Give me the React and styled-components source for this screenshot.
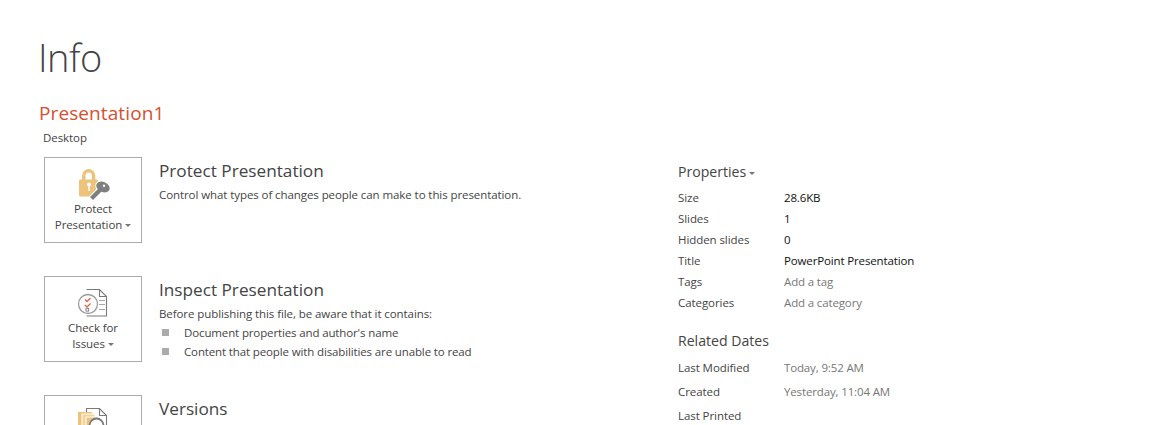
import React from "react";
import styled, { createGlobalStyle } from "styled-components";

const GlobalStyle = createGlobalStyle`
  html, body {
    margin: 0;
    height: 425px;
    overflow: hidden;
    background: #fff;
    font-family: "Open Sans", "Noto Sans", sans-serif;
    color: #444;
  }
`;

const Page = styled.div`
  width: 1170px;
  height: 425px;
  overflow: hidden;
  padding: 32px 0 0 38px;
  box-sizing: border-box;
`;

const Heading = styled.h1`
  margin: 0;
  font-size: 38px;
  line-height: 50px;
  font-weight: 300;
  letter-spacing: -0.5px;
  color: #444;
`;

const FileName = styled.div`
  margin: 17px 0 0 1px;
  font-size: 19px;
  line-height: 28px;
  letter-spacing: 0.1px;
  color: #d5502f;
`;

const FilePath = styled.div`
  margin: 3px 0 0 5px;
  font-size: 11.5px;
  line-height: 16px;
  letter-spacing: -0.07px;
  color: #444;
`;

const Columns = styled.div`
  display: flex;
  margin: 11px 0 0 6px;
`;

const LeftColumn = styled.div`
  width: 634px;
  display: flex;
  flex-direction: column;
  gap: 33px;
`;

const Section = styled.section`
  display: flex;
  gap: 17px;
`;

const ActionButton = styled.button`
  width: 98px;
  height: 86px;
  flex: none;
  padding: 10px 0 0;
  box-sizing: border-box;
  display: flex;
  flex-direction: column;
  align-items: center;
  background: #fff;
  border: 1px solid #ababab;
  font: inherit;
  font-size: 11.5px;
  line-height: 16px;
  letter-spacing: -0.1px;
  color: #444;
`;

const Label = styled.span`
  white-space: nowrap;
`;

const Caret = styled.span`
  display: inline-block;
  margin-left: 3px;
  vertical-align: 2px;
  border-left: 3px solid transparent;
  border-right: 3px solid transparent;
  border-top: 3px solid #777;
`;

const SectionTitle = styled.h2`
  margin: 0;
  font-size: 17.2px;
  line-height: 28px;
  font-weight: 400;
  color: #444;
`;

const SectionText = styled.p`
  margin: 1px 0 0;
  font-size: 11.5px;
  line-height: 18px;
  letter-spacing: -0.08px;
  color: #444;
`;

const Bullets = styled.ul`
  margin: 0;
  padding: 0;
  list-style: none;
`;

const Bullet = styled.li`
  display: flex;
  align-items: center;
  height: 19px;
  font-size: 11.5px;
  letter-spacing: -0.13px;
  color: #444;
  &::before {
    content: "";
    width: 7px;
    height: 7px;
    margin: 0 15px 0 3px;
    background: #ababab;
  }
`;

const RightColumn = styled.aside`
  width: 300px;
`;

const SideTitle = styled.h3`
  margin: ${(p) => p.$top}px 0 0;
  font-size: 14.1px;
  line-height: 20px;
  font-weight: 400;
  color: #444;
`;

const Rows = styled.div`
  display: grid;
  grid-template-columns: 106px 1fr;
  grid-auto-rows: ${(p) => p.$pitch}px;
  align-items: center;
  margin-top: ${(p) => p.$top}px;
  font-size: 11.5px;
  letter-spacing: -0.07px;
`;

const Key = styled.span`
  color: #444;
`;

const Value = styled.span`
  letter-spacing: -0.14px;
  color: ${(p) => p.$color};
`;

function LockIcon() {
  return (
    <svg width="34" height="33" viewBox="0 0 34 33">
      <path d="M7.8 13V7a4.9 4.9 0 0 1 9.8 0v6" fill="none" stroke="#edc27a" strokeWidth="3.4" transform="translate(0 0.6)" />
      <rect x="3" y="11.5" width="19" height="17" rx="1.5" fill="#edc27a" />
      <circle cx="13" cy="16.5" r="2" fill="#fff" />
      <rect x="12.3" y="17" width="1.4" height="6" fill="#fff" />
      <path d="M15.5 30.5l9-9" stroke="#fff" strokeWidth="6.5" />
      <ellipse cx="27" cy="19" rx="7.5" ry="5.6" transform="rotate(25 27 19)" fill="#7f7f7f" stroke="#fff" strokeWidth="1" />
      <path d="M15.5 30.5l9-9" stroke="#7f7f7f" strokeWidth="4.2" />
      <circle cx="28" cy="17.8" r="1.2" fill="#fff" />
    </svg>
  );
}

function CheckIcon() {
  return (
    <svg width="34" height="33" viewBox="0 0 34 33" fill="none">
      <path d="M10.5 2.5h13l7 7v19.5H10.5" stroke="#7a7a7a" strokeWidth="1.1" />
      <path d="M23.5 2.5v7h7" stroke="#7a7a7a" strokeWidth="1.1" />
      <path d="M23 13.5h6M23 17.5h6M23 22.5h6" stroke="#a8a8a8" />
      <circle cx="12" cy="17" r="9.5" fill="#fff" stroke="#9a9a9a" strokeWidth="1.3" />
      <path d="M9 12.5l2 2 3.5-3.5M9 18l2 2 3.5-3.5" stroke="#e2674a" strokeWidth="1.4" />
      <rect x="10" y="21.5" width="2.6" height="2.6" stroke="#8a8a8a" />
    </svg>
  );
}

function VersionsIcon() {
  return (
    <svg width="34" height="33" viewBox="0 0 34 33" fill="none">
      <path d="M10.5 2.5h13l7 7v19.5H10.5z" fill="#fff" stroke="#7a7a7a" strokeWidth="1.1" />
      <path d="M23.5 2.5v7h7" stroke="#7a7a7a" strokeWidth="1.1" />
      <rect x="2" y="6" width="14" height="25" fill="#edc27a" />
      <rect x="6" y="8" width="13" height="23" fill="#f3d49d" stroke="#fff" />
      <rect x="10" y="11" width="12" height="20" fill="#edc27a" stroke="#fff" />
      <circle cx="20.5" cy="19.5" r="7" fill="#fff" stroke="#7a7a7a" strokeWidth="1.8" />
    </svg>
  );
}

const properties = [
  ["Size", "28.6KB", "#111"],
  ["Slides", "1", "#111"],
  ["Hidden slides", "0", "#111"],
  ["Title", "PowerPoint Presentation", "#111"],
  ["Tags", "Add a tag", "#777"],
  ["Categories", "Add a category", "#777"],
];

const dates = [
  ["Last Modified", "Today, 9:52 AM"],
  ["Created", "Yesterday, 11:04 AM"],
  ["Last Printed", ""],
];

export default function App() {
  return (
    <Page>
      <GlobalStyle />
      <Heading>Info</Heading>
      <FileName>Presentation1</FileName>
      <FilePath>Desktop</FilePath>
      <Columns>
        <LeftColumn>
          <Section>
            <ActionButton>
              <LockIcon />
              <Label>Protect</Label>
              <Label>
                Presentation
                <Caret />
              </Label>
            </ActionButton>
            <div>
              <SectionTitle>Protect Presentation</SectionTitle>
              <SectionText>Control what types of changes people can make to this presentation.</SectionText>
            </div>
          </Section>
          <Section>
            <ActionButton>
              <CheckIcon />
              <Label>Check for</Label>
              <Label>
                Issues
                <Caret />
              </Label>
            </ActionButton>
            <div>
              <SectionTitle>Inspect Presentation</SectionTitle>
              <SectionText>Before publishing this file, be aware that it contains:</SectionText>
              <Bullets>
                <Bullet>Document properties and author's name</Bullet>
                <Bullet>Content that people with disabilities are unable to read</Bullet>
              </Bullets>
            </div>
          </Section>
          <Section>
            <ActionButton>
              <VersionsIcon />
            </ActionButton>
            <div>
              <SectionTitle>Versions</SectionTitle>
            </div>
          </Section>
        </LeftColumn>
        <RightColumn>
          <SideTitle $top={5}>
            Properties
            <Caret />
          </SideTitle>
          <Rows $pitch={21} $top={5}>
            {properties.map(([key, value, color]) => (
              <React.Fragment key={key}>
                <Key>{key}</Key>
                <Value $color={color}>{value}</Value>
              </React.Fragment>
            ))}
          </Rows>
          <SideTitle $top={18}>Related Dates</SideTitle>
          <Rows $pitch={24} $top={4}>
            {dates.map(([key, value]) => (
              <React.Fragment key={key}>
                <Key>{key}</Key>
                <Value $color="#777">{value}</Value>
              </React.Fragment>
            ))}
          </Rows>
        </RightColumn>
      </Columns>
    </Page>
  );
}
